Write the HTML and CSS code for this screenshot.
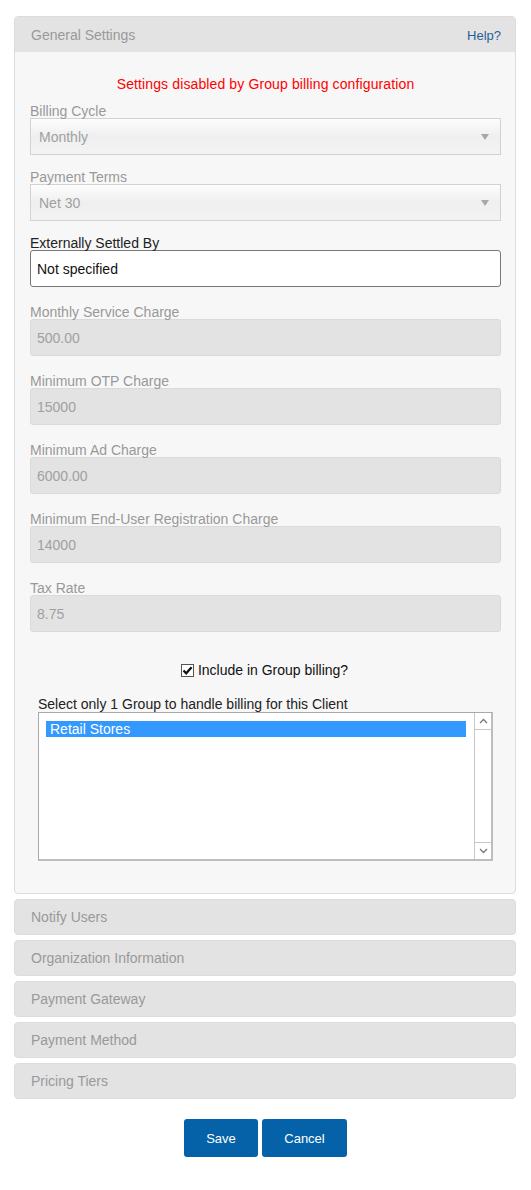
FILE: index.html
```html
<!DOCTYPE html>
<html>
<head>
<meta charset="utf-8">
<link rel="stylesheet" href="styles.css">
</head>
<body>
<div class="page">
  <div class="panel">
    <div class="panel-head">
      <span class="panel-title">General Settings</span>
      <a class="help" href="#">Help?</a>
    </div>
    <div class="panel-body">
      <div class="warning">Settings disabled by Group billing configuration</div>

      <div class="group group-select">
        <div class="label">Billing Cycle</div>
        <div class="select"><span>Monthly</span><span class="caret"></span></div>
      </div>
      <div class="group group-select">
        <div class="label">Payment Terms</div>
        <div class="select"><span>Net 30</span><span class="caret"></span></div>
      </div>
      <div class="group">
        <div class="label label-active">Externally Settled By</div>
        <div class="input input-active">Not specified</div>
      </div>
      <div class="group">
        <div class="label">Monthly Service Charge</div>
        <div class="input">500.00</div>
      </div>
      <div class="group">
        <div class="label">Minimum OTP Charge</div>
        <div class="input">15000</div>
      </div>
      <div class="group">
        <div class="label">Minimum Ad Charge</div>
        <div class="input">6000.00</div>
      </div>
      <div class="group">
        <div class="label">Minimum End-User Registration Charge</div>
        <div class="input">14000</div>
      </div>
      <div class="group group-last">
        <div class="label">Tax Rate</div>
        <div class="input">8.75</div>
      </div>

      <div class="check-row">
        <span class="checkbox"><svg width="11" height="11" viewBox="0 0 11 11"><path d="M1.5 5.5 L4.2 8.3 L9.6 2.2" fill="none" stroke="#111" stroke-width="2.2"/></svg></span>
        <span class="check-label">Include in Group billing?</span>
      </div>

      <div class="group-list">
        <div class="list-label">Select only 1 Group to handle billing for this Client</div>
        <div class="listbox">
          <div class="options">
            <div class="option selected">Retail Stores</div>
          </div>
          <div class="scrollbar">
            <div class="sb-btn"><svg width="9" height="6" viewBox="0 0 9 6"><path d="M1 5 L4.5 1.5 L8 5" fill="none" stroke="#777" stroke-width="1.3"/></svg></div>
            <div class="sb-track"></div>
            <div class="sb-btn"><svg width="9" height="6" viewBox="0 0 9 6"><path d="M1 1 L4.5 4.5 L8 1" fill="none" stroke="#777" stroke-width="1.3"/></svg></div>
          </div>
        </div>
      </div>
    </div>
  </div>

  <div class="collapsed">Notify Users</div>
  <div class="collapsed">Organization Information</div>
  <div class="collapsed">Payment Gateway</div>
  <div class="collapsed">Payment Method</div>
  <div class="collapsed">Pricing Tiers</div>

  <div class="actions">
    <button class="btn btn-save">Save</button>
    <button class="btn btn-cancel">Cancel</button>
  </div>
</div>
</body>
</html>
```

FILE: styles.css
```css
* { box-sizing: border-box; }
html, body { margin: 0; padding: 0; background: #fff; }
body {
  font-family: "Liberation Sans", Arial, sans-serif;
  font-size: 14px;
  color: #333;
}
.page { padding: 16px 15px 0 14px; }

.panel {
  border: 1px solid #dcdcdc;
  border-radius: 4px;
  background: #f7f7f7;
  overflow: hidden;
}
.panel-head {
  height: 35px;
  background: #e3e3e3;
  display: flex;
  align-items: center;
  justify-content: space-between;
  padding: 0 14px 0 16px;
}
.panel-title { color: #999; font-size: 14px; }
.help { color: #1f5f9a; font-size: 13px; text-decoration: none; margin-top: 2px; }

.panel-body { padding: 24px 14px 32px 15px; }
.warning {
  color: #ff0000;
  text-align: center;
  line-height: 16px;
  margin-bottom: 10px;
  letter-spacing: 0.12px;
}

.group { margin-bottom: 16px; }
.group-select { margin-bottom: 13px; }
.group-last { margin-bottom: 28px; }
.label {
  color: #999;
  line-height: 16px;
  padding-top: 1px;
  margin-bottom: -1px;
}
.label-active { color: #222; }

.select {
  height: 37px;
  border: 1px solid #d2d2d2;
  background: linear-gradient(#fdfdfd, #efefef 50%, #f3f3f3);
  color: #a0a0a0;
  display: flex;
  align-items: center;
  justify-content: space-between;
  padding: 0 11px 0 8px;
}
.caret {
  width: 0; height: 0;
  border-left: 4px solid transparent;
  border-right: 4px solid transparent;
  border-top: 6px solid #a8a8a8;
  margin-top: 1px;
}

.input {
  height: 37px;
  border: 1px solid #dadada;
  border-radius: 3px;
  background: #e3e3e3;
  color: #a0a0a0;
  display: flex;
  align-items: center;
  padding: 0 6px;
}
.input-active {
  background: #fff;
  border-color: #777;
  color: #111;
}

.check-row {
  height: 20px;
  display: flex;
  align-items: center;
  justify-content: center;
  gap: 4px;
  color: #111;
  margin-bottom: 15px;
  padding-right: 2px;
}
.checkbox {
  width: 13px; height: 13px;
  border: 1px solid #555;
  background: #fff;
  display: flex;
  align-items: center;
  justify-content: center;
}
.checkbox svg { display: block; }

.group-list { padding: 0 8px 0 8px; }
.list-label {
  color: #222;
  line-height: 16px;
  padding-top: 1px;
}
.listbox {
  height: 149px;
  border: 1px solid #a9a9a9;
  border-right-width: 2px;
  border-bottom-width: 2px;
  border-right-color: #bdbdbd;
  border-bottom-color: #bdbdbd;
  background: #fff;
  display: flex;
}
.options { flex: 1; padding: 8px 8px 0 7px; }
.option { height: 16px; line-height: 16px; padding-left: 4px; color: #222; }
.option.selected { background: #3399ff; color: #fff; }
.scrollbar {
  width: 17px;
  border-left: 1px solid #c8c8c8;
  display: flex;
  flex-direction: column;
}
.sb-btn {
  height: 17px;
  display: flex;
  align-items: center;
  justify-content: center;
  border-bottom: 1px solid #c8c8c8;
}
.sb-btn:last-child { border-bottom: none; border-top: 1px solid #c8c8c8; }
.sb-track { flex: 1; }

.collapsed {
  margin-top: 5px;
  height: 36px;
  border: 1px solid #dcdcdc;
  border-radius: 4px;
  background: #e3e3e3;
  color: #999;
  display: flex;
  align-items: center;
  padding-left: 16px;
}

.actions {
  display: flex;
  justify-content: center;
  gap: 4px;
  margin-top: 20px;
  padding-left: 1px;
}
.btn {
  height: 38px;
  border: none;
  border-radius: 3px;
  background: #0562a8;
  color: #fff;
  font-family: "Liberation Sans", Arial, sans-serif;
  font-size: 13px;
  padding: 0;
}
.btn-save { width: 74px; }
.btn-cancel { width: 85px; }
```
